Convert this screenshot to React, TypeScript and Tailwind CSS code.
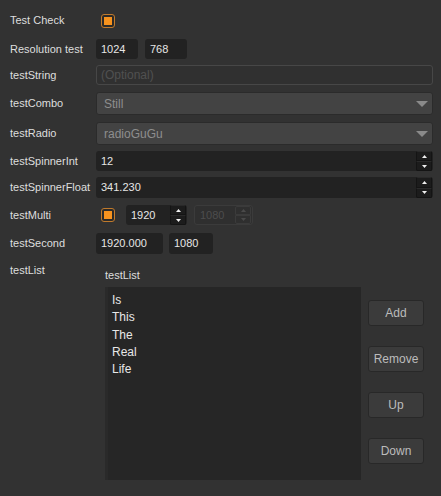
import React from 'react';

const font = "font-['Liberation_Sans',Arial,sans-serif]";

function Check() {
  return (
    <div className="w-[14px] h-[14px] rounded-[3px] border border-[#c07a2c] bg-[#2c2a28] flex items-center justify-center">
      <div className="w-[8px] h-[8px] bg-[#f7931e]" />
    </div>
  );
}

function Field({ value, w, disabled }: { value: string; w: string; disabled?: boolean }) {
  return (
    <div
      className={`${w} h-full rounded-[3px] flex items-center pl-[5px] ${
        disabled ? 'bg-[#2f2f2f] border border-[#3b3b3b] text-[#4d4d4d]' : 'bg-[#222222] text-[#e6e6e6]'
      }`}
    >
      {value}
    </div>
  );
}

function Tri({ up, color }: { up?: boolean; color: string }) {
  return (
    <svg width="5" height="3" viewBox="0 0 5 3">
      <polygon points={up ? '0,3 2.5,0 5,3' : '0,0 5,0 2.5,3'} fill={color} />
    </svg>
  );
}

function Spin({ value, w, disabled }: { value: string; w: string; disabled?: boolean }) {
  const btn = disabled
    ? 'bg-[#2f2f2f] border border-[#3b3b3b]'
    : 'bg-[#1c1c1c] border border-[#141414] border-t-[#2a2a2a]';
  const tri = disabled ? '#4a4a4a' : '#f0f0f0';
  return (
    <div
      className={`${w} h-full rounded-[3px] flex items-stretch ${
        disabled ? 'bg-[#2f2f2f] border border-[#3b3b3b] text-[#4d4d4d]' : 'bg-[#222222] text-[#e6e6e6]'
      }`}
    >
      <div className="flex-1 flex items-center pl-[5px]">{value}</div>
      <div className="w-[16px] flex flex-col mr-[1px]">
        <div className={`flex-1 flex items-center justify-center rounded-t-[2px] ${btn}`}>
          <Tri up color={tri} />
        </div>
        <div className={`flex-1 flex items-center justify-center rounded-b-[2px] ${btn}`}>
          <Tri color={tri} />
        </div>
      </div>
    </div>
  );
}

function Combo({ value }: { value: string }) {
  return (
    <div className="flex-1 h-full rounded-[3px] bg-[#434343] border border-[#2b2b2b] flex items-center pl-[7px] pr-[4px] text-[#8e8e8e] text-[12px]">
      <div className="flex-1">{value}</div>
      <svg width="12" height="6" viewBox="0 0 12 6">
        <polygon points="0,0 12,0 6,6" fill="#8a8a8a" />
      </svg>
    </div>
  );
}

function Row({ label, className, children }: { label: string; className: string; children?: React.ReactNode }) {
  return (
    <div className={`flex items-center ${className}`}>
      <div className="w-[86px] shrink-0">{label}</div>
      {children}
    </div>
  );
}

const buttons = ['Add', 'Remove', 'Up', 'Down'];
const items = ['Is', 'This', 'The', 'Real', 'Life'];

export default function App() {
  return (
    <div className={`w-[441px] h-[496px] bg-[#323232] ${font} text-[11px] text-[#dedede] pl-[10px] pr-[8px] pt-[13px] flex flex-col overflow-hidden`}>
      <Row label="Test Check" className="h-[15px]">
        <div className="ml-[5px]">
          <Check />
        </div>
      </Row>
      <Row label="Resolution test" className="mt-[11px] h-[20px]">
        <div className="flex gap-[7px] h-full">
          <Field value="1024" w="w-[42px]" />
          <Field value="768" w="w-[42px]" />
        </div>
      </Row>
      <Row label="testString" className="mt-[6px] h-[20px]">
        <div className="flex-1 h-full rounded-[3px] bg-[#303030] border border-[#474747] flex items-center pl-[4px] text-[#505050] text-[12px]">
          (Optional)
        </div>
      </Row>
      <Row label="testCombo" className="mt-[7px] h-[23px]">
        <Combo value="Still" />
      </Row>
      <Row label="testRadio" className="mt-[7px] h-[23px]">
        <Combo value="radioGuGu" />
      </Row>
      <Row label="testSpinnerInt" className="mt-[6px] h-[20px]">
        <Spin value="12" w="flex-1" />
      </Row>
      <Row label="testSpinnerFloat" className="mt-[6px] h-[21px]">
        <Spin value="341.230" w="flex-1" />
      </Row>
      <Row label="testMulti" className="mt-[7px] h-[20px]">
        <div className="flex items-center h-full">
          <div className="ml-[5px] mr-[11px]">
            <Check />
          </div>
          <div className="flex gap-[7px] h-full">
            <Spin value="1920" w="w-[61px]" />
            <Spin value="1080" w="w-[59px]" disabled />
          </div>
        </div>
      </Row>
      <Row label="testSecond" className="mt-[8px] h-[21px]">
        <div className="flex gap-[6px] h-full">
          <Field value="1920.000" w="w-[67px]" />
          <Field value="1080" w="w-[44px]" />
        </div>
      </Row>
      <div className="flex items-start mt-[10px]">
        <div className="w-[86px] shrink-0 leading-[13px]">testList</div>
        <div className="pl-[9px] flex flex-col">
          <div className="mt-[5px] leading-[13px]">testList</div>
          <div className="mt-[5px] flex">
            <div className="w-[256px] h-[193px] bg-[#262626] border-l-[3px] border-[#2a2a2a] pl-[4px] pt-[5px] flex flex-col text-[#e8e8e8] text-[12px]">
              {items.map((it) => (
                <div key={it} className="leading-[17.3px]">
                  {it}
                </div>
              ))}
            </div>
            <div className="ml-[7px] pt-[13px] flex flex-col gap-[20px]">
              {buttons.map((b) => (
                <div
                  key={b}
                  className="w-[56px] h-[26px] rounded-[3px] bg-[#3b3b3b] border border-[#282828] flex items-center justify-center text-[12px] text-[#bcbcbc]"
                >
                  {b}
                </div>
              ))}
            </div>
          </div>
        </div>
      </div>
    </div>
  );
}
